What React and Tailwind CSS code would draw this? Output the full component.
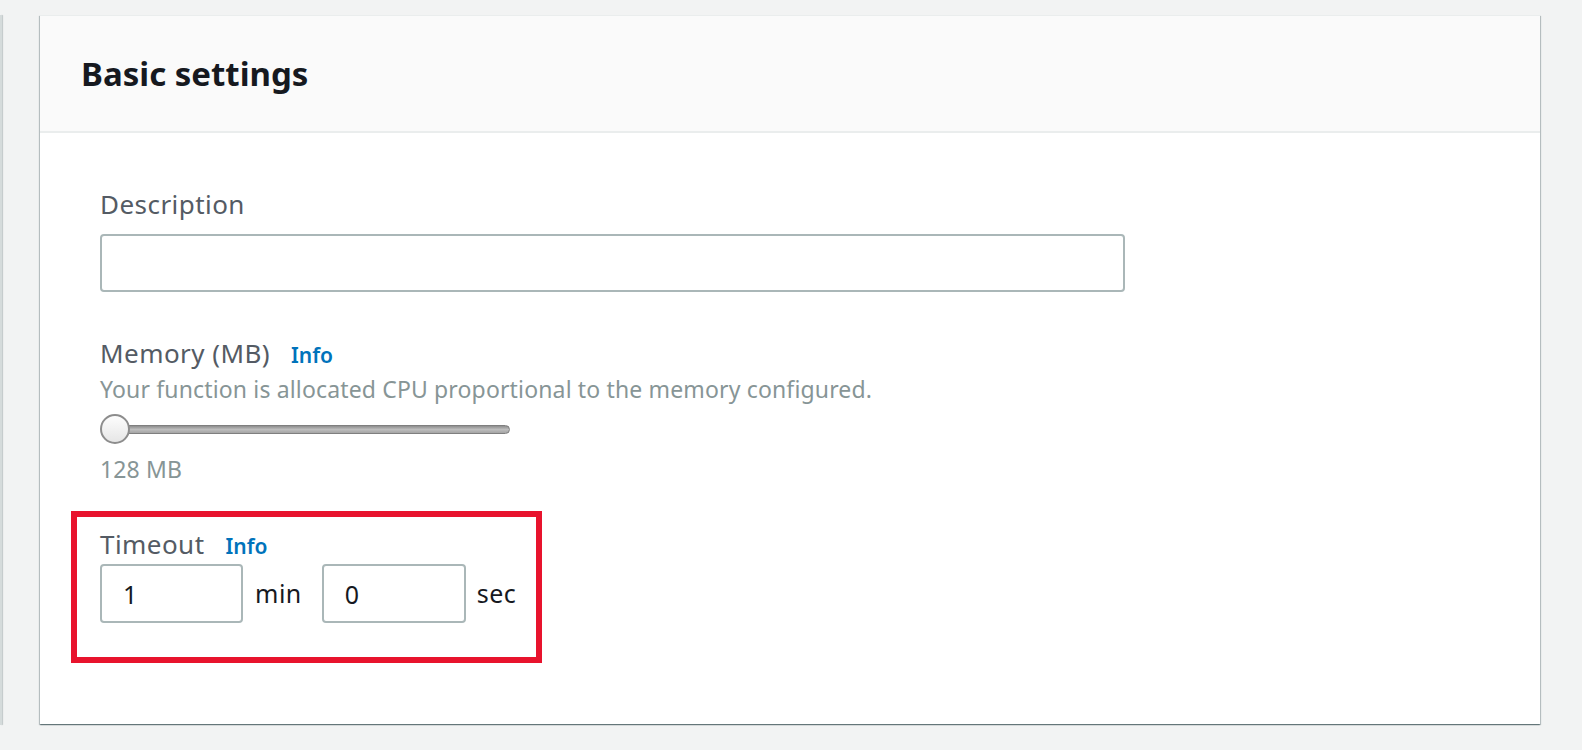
import React from "react";

const font = { fontFamily: '"Noto Sans", "Open Sans", sans-serif' };

const Label = ({ children, info }) => (
    <div className="flex items-baseline h-[32px] text-[26px] leading-[32px] tracking-[0.45px] text-[#545b64]">
        <span>{children}</span>
        {info && <a className="ml-[21px] text-[21px] font-semibold tracking-normal text-[#0073bb]">Info</a>}
    </div>
);

const Slider = () => (
    <div className="relative mt-[11px] h-[30px] w-[410px] flex items-center">
        <div className="ml-[14px] h-[9px] flex-1 rounded-full border border-[#7f7f7f] bg-gradient-to-b from-[#8e8e8e] via-[#bdbdbd] to-[#a5a5a5]" />
        <div className="absolute left-0 top-0 h-[30px] w-[30px] rounded-full border-2 border-[#8d8d8d] bg-gradient-to-b from-[#fdfdfd] to-[#e6e6e6]" />
    </div>
);

export default function App() {
    return (
        <div className="flex h-[750px] w-full bg-[#f2f3f3] pt-[15px]" style={font}>
            <div className="h-[710px] w-[2px] bg-[#d5dbdb] shadow-[1px_0_1px_rgba(0,28,36,0.2)]" />
            <div className="ml-[38px] flex h-[709px] w-[1500px] flex-col bg-white border-t border-[#eaeded] shadow-[0_1px_1px_0_rgba(0,28,36,0.35),1px_1px_1px_0_rgba(0,28,36,0.2),-1px_1px_1px_0_rgba(0,28,36,0.2)]">
                <div className="flex h-[117px] items-center bg-[#fafafa] border-b-2 border-[#eaeded] pl-[41px]">
                    <h2 className="text-[33px] font-bold text-[#16191f]">Basic settings</h2>
                </div>
                <div className="flex flex-col px-[60px] pt-[55px]">
                    <Label>Description</Label>
                    <input className="mt-[14px] h-[58px] w-[1025px] rounded-[4px] border-2 border-[#aab7b8] px-[20px] text-[25px] outline-none" />

                    <div className="mt-[45px]">
                        <Label info>Memory (MB)</Label>
                    </div>
                    <p className="mt-[6px] h-[28px] text-[23px] leading-[28px] tracking-[0.15px] text-[#879596]">
                        Your function is allocated CPU proportional to the memory configured.
                    </p>
                    <Slider />
                    <p className="mt-[11px] h-[28px] text-[23px] leading-[28px] tracking-[0.15px] text-[#879596]">128 MB</p>

                    <div className="mt-[28px] -ml-[29px] w-[471px] border-[6px] border-[#e8132d] pl-[23px] pt-[11px] pb-[34px]">
                        <Label info>Timeout</Label>
                        <div className="mt-[4px] flex items-center">
                            <input defaultValue="1" className="h-[59px] w-[143px] rounded-[4px] border-2 border-[#aab7b8] px-[21px] text-[25px] text-[#16191f] outline-none" />
                            <span className="ml-[12px] text-[25px] tracking-[0.5px] text-[#16191f]">min</span>
                            <input defaultValue="0" className="ml-[20px] h-[59px] w-[144px] rounded-[4px] border-2 border-[#aab7b8] px-[21px] text-[25px] text-[#16191f] outline-none" />
                            <span className="ml-[11px] text-[25px] tracking-[0.5px] text-[#16191f]">sec</span>
                        </div>
                    </div>
                </div>
            </div>
        </div>
    );
}
